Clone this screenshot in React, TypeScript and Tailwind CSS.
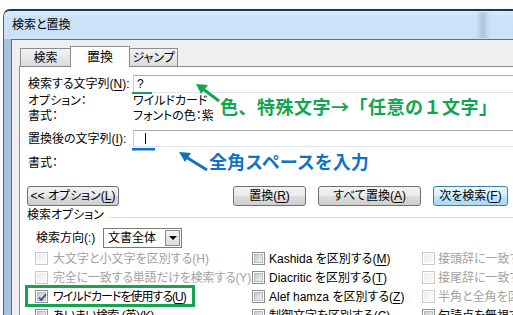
import React from "react";

type CBState = "on" | "off" | "dis";

function Check({ state }: { state: CBState }) {
  if (state === "dis") {
    return (
      <span className="flex w-[13px] h-[13px] shrink-0 items-center justify-center border border-[#c9c9c9] bg-white">
        <span className="w-[9px] h-[9px] bg-[linear-gradient(135deg,#ececec,#fafafa)]" />
      </span>
    );
  }
  return (
    <span className="relative flex w-[13px] h-[13px] shrink-0 items-center justify-center border border-[#8e8f8f] bg-white">
      <span className="w-[9px] h-[9px] border border-[#b7bcc2] bg-[linear-gradient(135deg,#c5cad0,#f2f2f2)]" />
      {state === "on" && (
        <svg className="absolute left-[1px] top-[1px]" width="11" height="11" viewBox="0 0 11 11">
          <path d="M2 5.5 L4.3 8 L9 2.2" fill="none" stroke="#3d5594" strokeWidth="2" />
        </svg>
      )}
    </span>
  );
}

function CBRow({
  state,
  children,
  gap = "gap-[5px]",
  track = "",
}: {
  state: CBState;
  children: React.ReactNode;
  gap?: string;
  track?: string;
}) {
  return (
    <div className={`flex h-[19px] items-center whitespace-nowrap ${gap} ${state === "dis" ? "text-[#a2a2a2]" : "text-black"}`}>
      <Check state={state} />
      <span className={track}>{children}</span>
    </div>
  );
}

function Btn({ w, ml, focus, children }: { w: string; ml?: string; focus?: boolean; children: React.ReactNode }) {
  return (
    <div
      className={`${w} ${ml ?? ""} h-[20px] shrink-0 flex items-center justify-center rounded-[3px] border whitespace-nowrap ${
        focus
          ? "border-[#3c7fb1] bg-[linear-gradient(180deg,#eaf6fd_0%,#d9f0fc_50%,#bee6fd_51%,#a7d9f5_100%)]"
          : "border-[#707070] bg-[linear-gradient(180deg,#f2f2f2_0%,#ebebeb_50%,#dddddd_51%,#cfcfcf_100%)]"
      }`}
    >
      {children}
    </div>
  );
}

export default function App() {
  return (
    <div className="relative w-[513px] h-[315px] overflow-hidden bg-white text-[12px] text-black font-['Liberation_Sans','Noto_Sans_CJK_JP',sans-serif] [font-feature-settings:'palt']">
      <div className="h-[9px]" />
      <div className="w-[530px] h-[306px] ml-[3px] rounded-tl-[7px] border-l border-t-2 border-l-[#4a6480] border-t-[#1c3658] bg-[linear-gradient(90deg,#a9c3de,#c9ddf1)] flex flex-col overflow-hidden">
        <div className="h-[28px] shrink-0 flex items-center pl-[8px] bg-[linear-gradient(180deg,#dbecfb_0%,#cbe3f9_20%,#c9e2f8_100%)] leading-none">
          <span className="text-[12px] text-black">検索と置換</span>
        </div>
        <div className="flex-1 ml-[7px] border-l border-t border-[#5f7184] bg-[#efefef] flex flex-col">
          <div className="h-[26px] shrink-0 flex items-end pl-[8px]">
            <div className="w-[51px] h-[18px] flex items-center justify-center border border-b-0 border-[#898c95] bg-[linear-gradient(180deg,#f2f2f2,#dcdcdc)]">
              検索
            </div>
            <div className="relative z-10 -ml-px -mb-px w-[60px] h-[21px] flex items-center justify-center border border-b-0 border-[#898c95] bg-white text-[13px]">
              置換
            </div>
            <div className="-ml-px w-[49px] h-[18px] flex items-center justify-center border border-b-0 border-[#898c95] bg-[linear-gradient(180deg,#f2f2f2,#dcdcdc)]">
              ジャンプ
            </div>
          </div>
          <div className="flex-1 ml-[7px] border-l border-t border-[#898c95] bg-white flex flex-col">
            {/* find row */}
            <div className="mt-[8px] h-[18px] flex items-center">
              <div className="w-[113px] pl-[8px] whitespace-nowrap">
                検索する文字列(<u className="underline-offset-2">N</u>):
              </div>
              <div className="flex-1 h-[18px] border border-[#abadb3] border-l-[#c6c8cf] border-b-[#dde3ea] flex items-center pl-[3px]">
                ?
              </div>
            </div>
            <div className="h-[15px] flex items-center">
              <div className="w-[113px] pl-[8px]">オプション：</div>
              <div>ワイルドカード</div>
            </div>
            <div className="h-[15px] flex items-center">
              <div className="w-[113px] pl-[8px]">書式：</div>
              <div>フォントの色：紫</div>
            </div>
            {/* replace row */}
            <div className="mt-[7px] h-[17px] flex items-center">
              <div className="w-[113px] pl-[8px] whitespace-nowrap">
                置換後の文字列(<u className="underline-offset-2">I</u>):
              </div>
              <div className="flex-1 h-[17px] border border-[#abadb3] border-l-[#c6c8cf] border-b-[#dde3ea] flex items-center pl-[11px]">
                <span className="w-px h-[11px] bg-black" />
              </div>
            </div>
            <div className="mt-[8px] h-[15px] flex items-center">
              <div className="w-[113px] pl-[8px]">書式：</div>
            </div>
            {/* buttons */}
            <div className="mt-[16px] h-[20px] flex items-center pl-[7px]">
              <Btn w="w-[92px]">
                &lt;&lt; オプション(<u className="underline-offset-2">L</u>)
              </Btn>
              <Btn w="w-[73px]" ml="ml-[114px]">
                置換(<u className="underline-offset-2">R</u>)
              </Btn>
              <Btn w="w-[103px]" ml="ml-[12px]">
                すべて置換(<u className="underline-offset-2">A</u>)
              </Btn>
              <Btn w="w-[75px]" ml="ml-[12px]" focus>
                次を検索(<u className="underline-offset-2">F</u>)
              </Btn>
            </div>
            {/* group label */}
            <div className="mt-[1px] h-[15px] flex items-center pl-[7px]">
              <span className="whitespace-nowrap">検索オプション</span>
              <span className="self-start mt-[10px] ml-[5px] flex-1 h-px bg-[#d5dfe5]" />
            </div>
            {/* direction */}
            <div className="mt-[6px] h-[20px] flex items-center pl-[16px]">
              <div className="w-[67px] whitespace-nowrap">検索方向(:)</div>
              <div className="w-[79px] h-[20px] border border-[#7a7a7a] bg-white flex items-center pl-[4px] pr-[1px]">
                <span className="flex-1">文書全体</span>
                <span className="w-[15px] h-[16px] border border-[#8a8a8a] bg-[linear-gradient(180deg,#f4f4f4,#dcdcdc)] flex items-center justify-center">
                  <span className="w-0 h-0 border-l-[4px] border-r-[4px] border-t-[4px] border-l-transparent border-r-transparent border-t-black" />
                </span>
              </div>
            </div>
            {/* checkboxes */}
            <div className="mt-[1px] grid grid-cols-[217px_170px_1fr] pl-[15px]">
              <div className="flex flex-col">
                <CBRow state="dis">大文字と小文字を区別する(H)</CBRow>
                <CBRow state="dis" track="tracking-[-0.2px]">完全に一致する単語だけを検索する(Y)</CBRow>
                <CBRow state="on" track="tracking-[-1px]">
                  ワイルドカードを使用する(<u className="underline-offset-2">U</u>)
                </CBRow>
                <CBRow state="off" track="tracking-[-0.6px]">
                  あいまい検索 (英)(<u className="underline-offset-2">K</u>)
                </CBRow>
              </div>
              <div className="flex flex-col">
                <CBRow state="off" gap="gap-[4px]">
                  Kashida を区別する(<u className="underline-offset-2">M</u>)
                </CBRow>
                <CBRow state="off" gap="gap-[4px]">
                  Diacritic を区別する(<u className="underline-offset-2">T</u>)
                </CBRow>
                <CBRow state="off" gap="gap-[4px]">
                  Alef hamza を区別する(<u className="underline-offset-2">Z</u>)
                </CBRow>
                <CBRow state="off" gap="gap-[4px]">
                  制御文字を区別する(<u className="underline-offset-2">C</u>)
                </CBRow>
              </div>
              <div className="flex flex-col">
                <CBRow state="dis" gap="gap-[3px]">接頭辞に一致する(X)</CBRow>
                <CBRow state="dis" gap="gap-[3px]">接尾辞に一致する(T)</CBRow>
                <CBRow state="dis" gap="gap-[3px]">半角と全角を区別する(M)</CBRow>
                <CBRow state="off" gap="gap-[3px]">句読点を無視する(S)</CBRow>
              </div>
            </div>
          </div>
        </div>
      </div>

      {/* title bar glass streak */}
      <div className="absolute left-[476px] top-[12px] w-[14px] h-[26px] bg-[linear-gradient(90deg,rgba(150,170,190,0)_0%,rgba(150,170,190,0.55)_50%,rgba(150,170,190,0)_100%)]" />

      {/* annotations */}
      <svg className="absolute left-0 top-0 pointer-events-none" width="513" height="315" viewBox="0 0 513 315">
        <rect x="132" y="92" width="20" height="2" fill="#12a64e" />
        <rect x="132" y="148" width="23" height="2.5" fill="#1670c2" />
        <line x1="219" y1="101" x2="203" y2="89" stroke="#12a64e" strokeWidth="3" />
        <polygon points="196,84 208,85 201,94" fill="#12a64e" />
        <line x1="207" y1="170" x2="186" y2="157" stroke="#1670c2" strokeWidth="3" />
        <polygon points="179,152 191,153 185,162" fill="#1670c2" />
      </svg>
      <div className="absolute left-[25px] top-[285px] w-[170px] h-[22px] border-[3px] border-[#12a64e]" />
      <div className="absolute left-[220px] top-[95px] whitespace-nowrap text-[18px] tracking-[0.5px] leading-[22px] font-bold text-[#0fa650] font-['Noto_Sans_CJK_JP',sans-serif] [font-feature-settings:normal]">
        色、特殊文字→「任意の１文字」
      </div>
      <div className="absolute left-[209px] top-[150px] whitespace-nowrap text-[18px] leading-[22px] font-bold text-[#0f72c6] font-['Noto_Sans_CJK_JP',sans-serif] [font-feature-settings:normal]">
        全角スペースを入力
      </div>
    </div>
  );
}
